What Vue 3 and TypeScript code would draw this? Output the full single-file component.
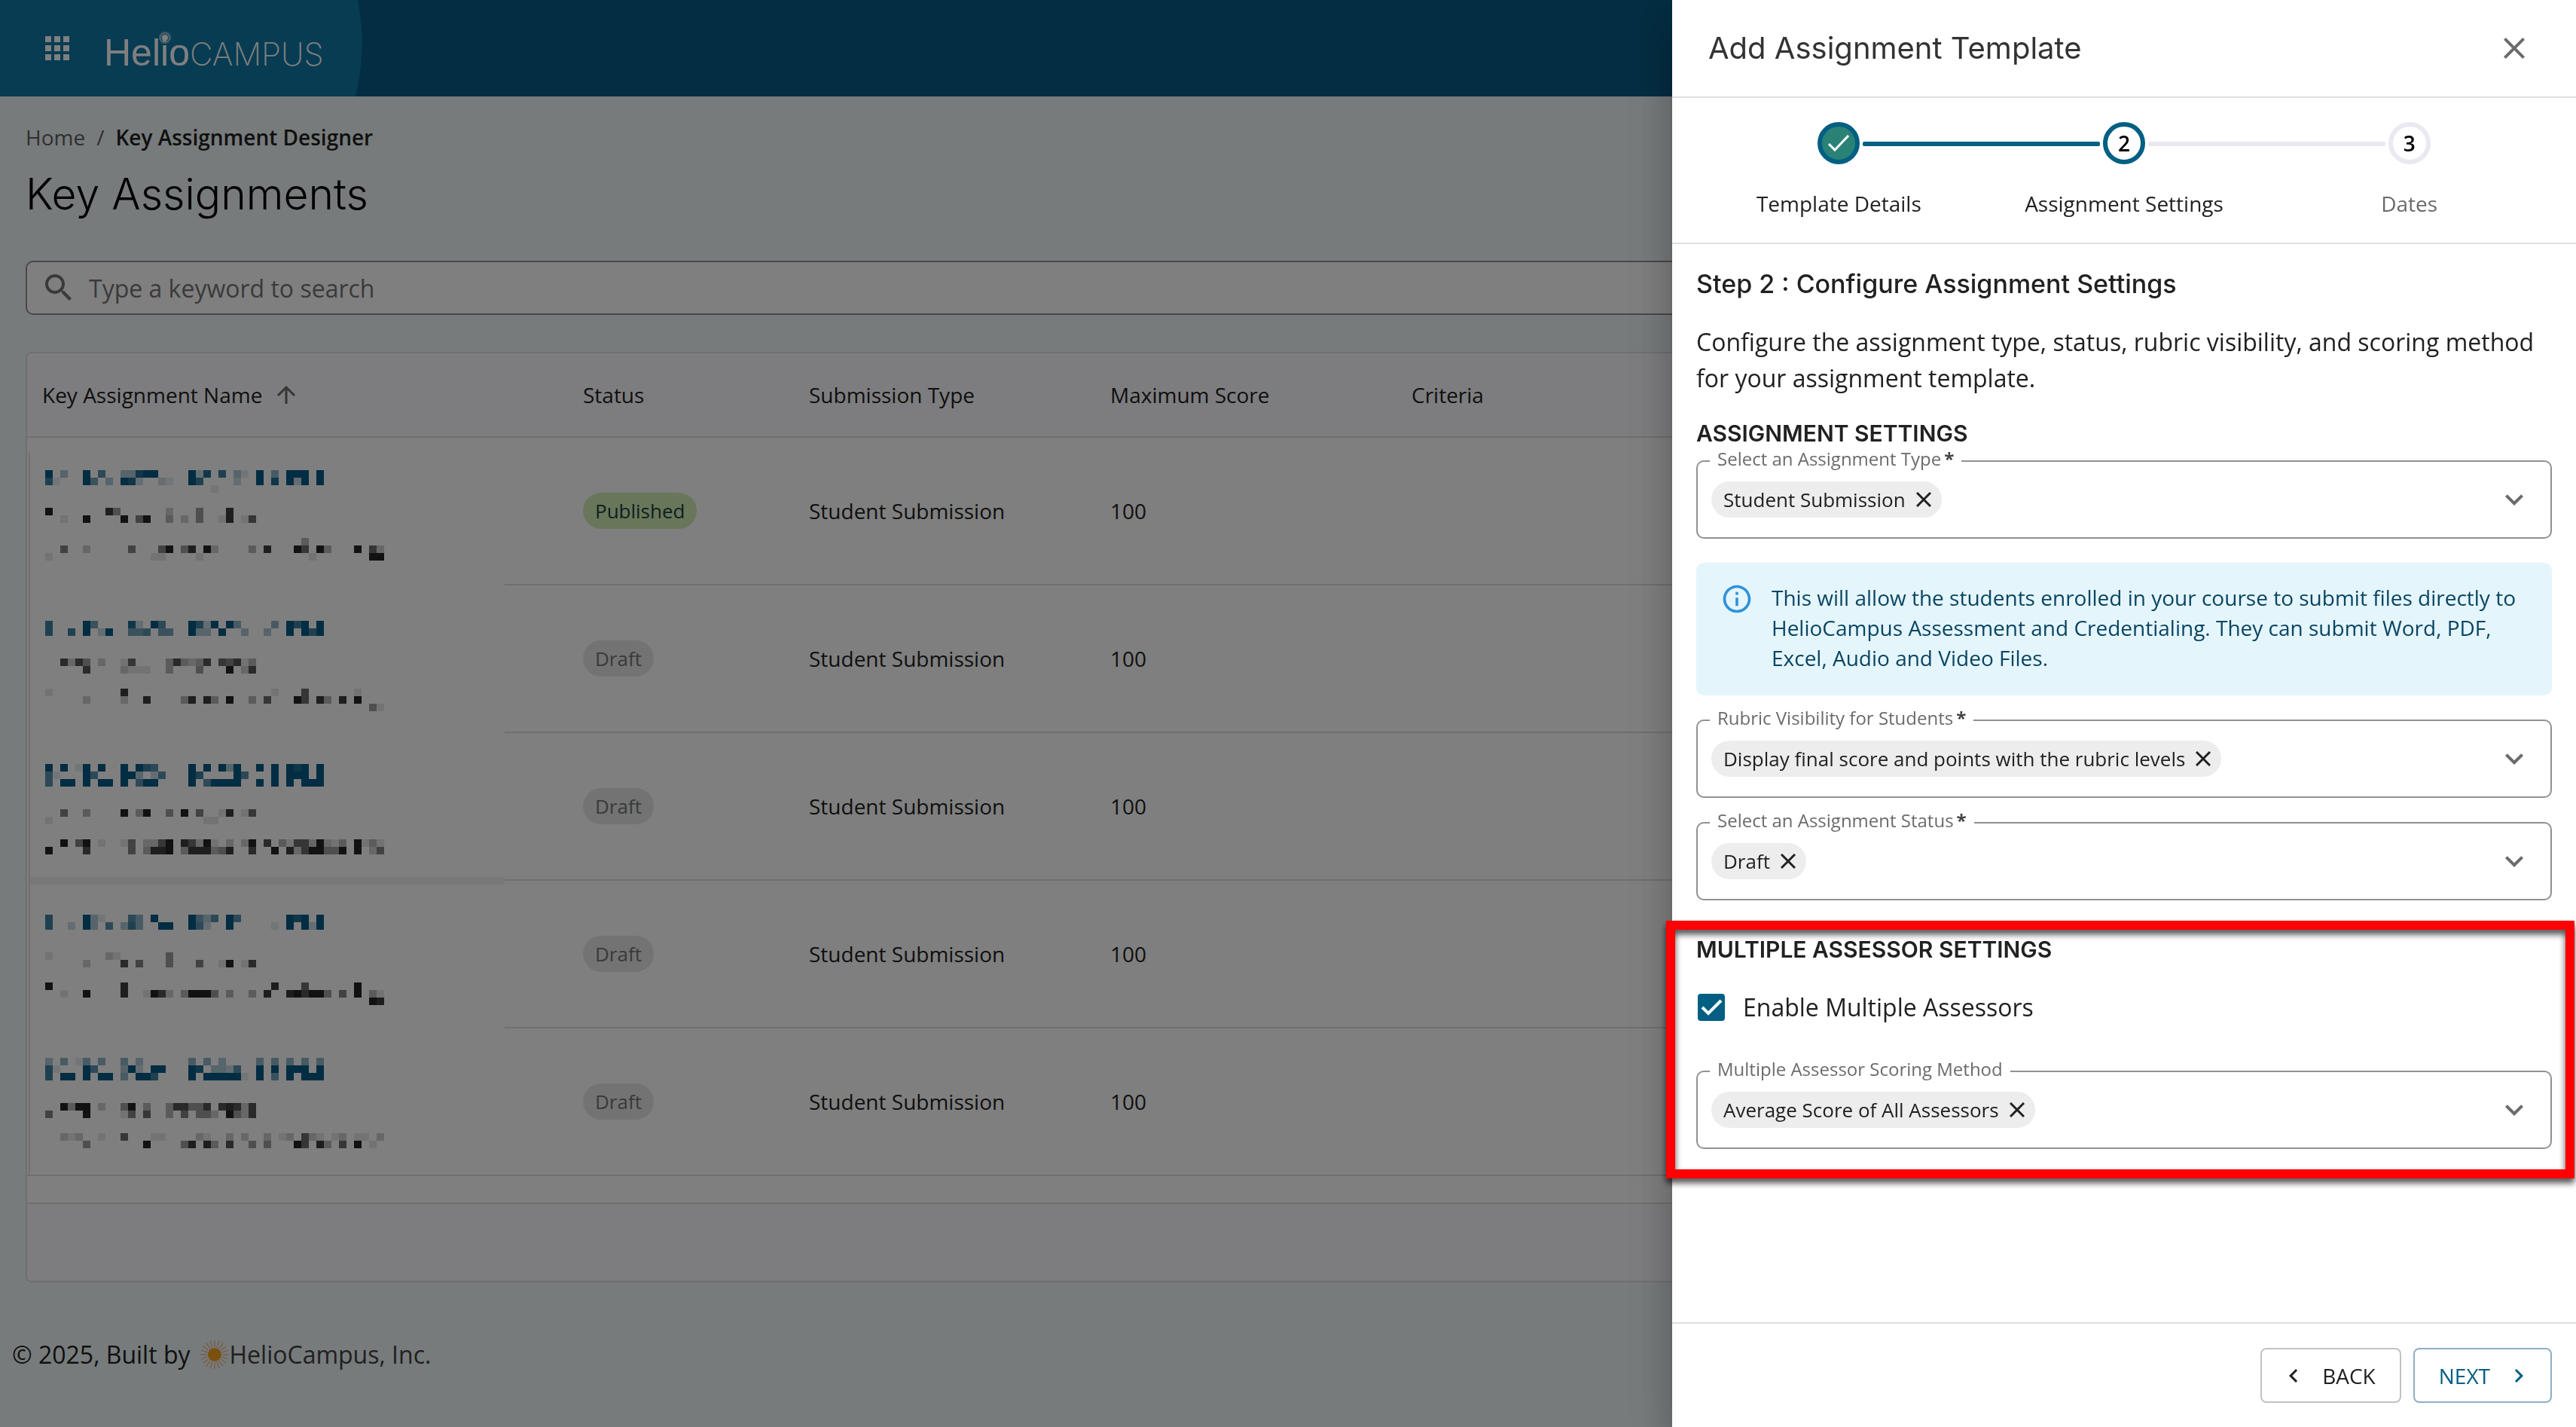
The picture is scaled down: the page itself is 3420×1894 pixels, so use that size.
<script setup lang="ts">
import { ref } from 'vue'

interface Band {
  y: number
  tone: 'link' | 'ink'
  cells: string
}

interface Row {
  status: 'Published' | 'Draft'
  type: string
  score: number
  bands: Band[]
}

interface Rect {
  x: number
  y: number
  opacity: number
  tone: string
}

const link = (y: number, cells: string): Band => ({ y, tone: 'link', cells })
const ink = (y: number, cells: string): Band => ({ y, tone: 'ink', cells })

// Each digit is one redaction block; its value is the block's strength.
const rows: Row[] = [
  {
    status: 'Published',
    type: 'Student Submission',
    score: 100,
    bands: [
      link(43, '9.3..9.6..33899....928.7.31.9.4.999.9'),
      link(53, '71...95.3.982..21..97....2..9.8.929.9'),
      link(63, '......................1'),
      ink(93, '9.......84......2...4...8'),
      ink(103, '..1..9....9.59..3.2.4..18.16'),
      ink(133, '..................................3'),
      ink(143, '..5..2.....5...59.48.92....3.8...96.93...9.62'),
      ink(153, '1.............11....1..............1.......99'),
    ],
  },
  {
    status: 'Draft',
    type: 'Student Submission',
    score: 100,
    bands: [
      link(47, '7....95....82.96...9729.94....4.979.9'),
      link(57, '7..7.9.29..556.55..933.9..3..3..9.979'),
      ink(97, '..7274.2..16....373237.65713'),
      ink(107, '.....7....2111..3...4...9.27'),
      ink(137, '1.........8...................1...6......1'),
      ink(147, '.....2....2..8....38.83.9..3.6...96.83.8.9'),
      ink(157, '...........................................41'),
    ],
  },
  {
    status: 'Draft',
    type: 'Student Submission',
    score: 100,
    bands: [
      link(41, '9.9.19.9..9.976....9.9.939..9.9.989.9'),
      link(51, '61...96...993.26...97....96...9.999.9'),
      link(61, '6.99.9.99.9.699....9.69999..9.9.9.999'),
      ink(101, '..5..3....9.39..4.9.5..18.16'),
      ink(111, '1....................11'),
      ink(141, '..9.59.1..15.2269.86291.2.29.7.316629213.9131'),
      ink(151, '9....7.....5.3889.3888348..7..9.82699449.9.25'),
    ],
  },
  {
    status: 'Draft',
    type: 'Student Submission',
    score: 100,
    bands: [
      link(45, '7....931...64.9....9536.96......989.9'),
      link(55, '7..2.93.6.374..99..962..9.....1.9.929'),
      ink(95, '1.......21......4'),
      ink(105, '.....2....7.5...4...5..19.17'),
      ink(135, '9.........8...................8...6......9'),
      ink(145, '..1..9....8..1972.39994.3..3.8..897994.5.9.31'),
      ink(155, '...........................................98'),
    ],
  },
  {
    status: 'Draft',
    type: 'Student Submission',
    score: 100,
    bands: [
      link(39, '3.4.14.4..4.3......4.4.3....4.4.4.4.4'),
      link(49, '71...96...392.99...98.3326..9.9.999.9'),
      link(59, '7.99.9.99.4.997....9.999991.9.5.9.999'),
      ink(99, '..9399.2..49.3..377447.78727'),
      ink(109, '5....9....15.6..3.5.442.9427'),
      ink(139, '..212..1..6...11....21..2.2..2.12.621.12.11.2'),
      ink(149, '.....4.......9....48.83.7..4.4...96.83.6.9.1'),
    ],
  },
]

const fills: Record<Band['tone'], string> = { link: '#075b86', ink: '#242424' }

function blocks(bands: Band[]): Rect[] {
  const out: Rect[] = []
  for (const band of bands) {
    band.cells.split('').forEach((cell, i) => {
      if (cell !== '.') {
        out.push({ x: 24 + i * 10, y: band.y, opacity: Number(cell) / 9, tone: fills[band.tone] })
      }
    })
  }
  return out
}

const rays = Array.from({ length: 20 }, (_, i) => i * 18)

interface Field {
  id: string
  label: string
  required: boolean
  value: string
}

const typeField: Field = { id: 'assignment-type', label: 'Select an Assignment Type', required: true, value: 'Student Submission' }
const laterFields: Field[] = [
  { id: 'rubric-visibility', label: 'Rubric Visibility for Students', required: true, value: 'Display final score and points with the rubric levels' },
  { id: 'assignment-status', label: 'Select an Assignment Status', required: true, value: 'Draft' },
]
const scoringField: Field = { id: 'scoring-method', label: 'Multiple Assessor Scoring Method', required: false, value: 'Average Score of All Assessors' }

const groups = [
  { fields: [typeField], info: true },
  { fields: laterFields, info: false },
]

const search = ref('')
const multiple = ref(true)
</script>

<template>
  <div class="page">
    <header class="topbar">
      <button class="icon-btn" type="button">
        <svg width="48" height="48" viewBox="0 0 24 24" fill="#fff" aria-hidden="true">
          <path d="M4 8h4V4H4zm6 12h4v-4h-4zm-6 0h4v-4H4zm0-6h4v-4H4zm6 0h4v-4h-4zm6-10v4h4V4zm-6 4h4V4h-4zm6 6h4v-4h-4zm0 6h4v-4h-4z" />
        </svg>
      </button>
      <a class="logo" href="#">
        <span class="logo-helio">Helio</span><span class="logo-campus">CAMPUS</span>
        <svg class="logo-sun" width="28" height="28" viewBox="-14 -14 28 28" aria-hidden="true">
          <circle r="4" fill="#fff" />
          <line v-for="a in rays" :key="a" y1="-5" y2="-8" stroke="#fff" stroke-width="1" :transform="`rotate(${a})`" />
        </svg>
      </a>
    </header>

    <main class="content">
      <nav class="crumbs">
        <a href="#">Home</a><span class="slash">/</span><strong>Key Assignment Designer</strong>
      </nav>
      <h1>Key Assignments</h1>
      <label class="search">
        <svg width="48" height="48" viewBox="0 0 24 24" fill="#757575" aria-hidden="true">
          <path d="M15.5 14h-.79l-.28-.27C15.41 12.59 16 11.11 16 9.5 16 5.91 13.09 3 9.5 3S3 5.91 3 9.5 5.91 16 9.5 16c1.61 0 3.09-.59 4.23-1.57l.27.28v.79l5 4.99L20.49 19zm-6 0C7.01 14 5 11.99 5 9.5S7.01 5 9.5 5 14 7.01 14 9.5 11.99 14 9.5 14" />
        </svg>
        <input v-model="search" type="text" placeholder="Type a keyword to search" />
      </label>

      <section class="card">
        <table>
          <thead>
            <tr>
              <th class="c-name">
                <span class="sort">Key Assignment Name
                  <svg width="28" height="28" viewBox="0 0 28 28" fill="none" stroke="#6b6b6b" stroke-width="3" aria-hidden="true">
                    <path d="M14 26V4M3 15 14 4l11 11" />
                  </svg>
                </span>
              </th>
              <th class="c-status">Status</th>
              <th class="c-type">Submission Type</th>
              <th class="c-score">Maximum Score</th>
              <th>Criteria</th>
            </tr>
          </thead>
          <tbody>
            <tr v-for="(row, i) in rows" :key="i">
              <td class="masked">
                <svg width="718" height="196" viewBox="0 0 718 196" aria-hidden="true">
                  <rect x="2" :y="i === 0 ? 20 : 0" width="2" :height="i === 0 ? 176 : 196" fill="#dedede" />
                  <rect v-if="i < 4" x="634" y="194" width="84" height="2" fill="#dedede" />
                  <rect v-else x="0" y="194" width="718" height="2" fill="#dedede" />
                  <rect v-if="i === 2" x="4" y="191" width="630" height="10" fill="#f0f0f0" />
                  <rect v-for="(b, n) in blocks(row.bands)" :key="n" :x="b.x" :y="b.y" width="10" height="10" :fill="b.tone" :fill-opacity="b.opacity" />
                </svg>
              </td>
              <td><span class="status" :class="{ live: row.status === 'Published' }">{{ row.status }}</span></td>
              <td>{{ row.type }}</td>
              <td>{{ row.score }}</td>
              <td></td>
            </tr>
          </tbody>
        </table>
        <div class="card-foot"></div>
      </section>
    </main>

    <footer class="legal">
      <span>© 2025, Built by</span>
      <svg width="40" height="44" viewBox="-20 -22 40 44" aria-hidden="true">
        <circle r="9" fill="#f9a11f" />
        <line v-for="a in rays" :key="a" y1="-10" y2="-19" stroke="#f0a860" stroke-width="1" :transform="`rotate(${a})`" />
      </svg>
      <a href="#">HelioCampus, Inc.</a>
    </footer>
  </div>

  <div class="scrim"></div>

  <aside class="drawer">
    <header class="drawer-head">
      <h2>Add Assignment Template</h2>
      <button class="icon-btn" type="button">
        <svg width="48" height="48" viewBox="0 0 24 24" fill="#6b6b6b" aria-hidden="true">
          <path d="M19 6.41 17.59 5 12 10.59 6.41 5 5 6.41 10.59 12 5 17.59 6.41 19 12 13.41 17.59 19 19 17.59 13.41 12z" />
        </svg>
      </button>
    </header>

    <ol class="stepper">
      <li class="done">
        <span class="dot">
          <svg width="32" height="32" viewBox="0 0 32 32" fill="none" stroke="#fff" stroke-width="3" aria-hidden="true">
            <path d="M3 17l8 8L29 6" />
          </svg>
        </span>
        <span class="step-label">Template Details</span>
      </li>
      <li class="current">
        <span class="dot">2</span>
        <span class="step-label">Assignment Settings</span>
      </li>
      <li>
        <span class="dot">3</span>
        <span class="step-label">Dates</span>
      </li>
    </ol>

    <div class="drawer-body">
      <h3>Step 2 : Configure Assignment Settings</h3>
      <p>Configure the assignment type, status, rubric visibility, and scoring method for your assignment template.</p>

      <h4>ASSIGNMENT SETTINGS</h4>
      <div class="stack">
        <template v-for="(group, g) in groups" :key="g">
          <div v-for="f in group.fields" :key="f.id" class="field">
            <label :for="f.id">{{ f.label }}<b v-if="f.required">*</b></label>
            <span class="chip">{{ f.value }}
              <button type="button">
                <svg width="20" height="20" viewBox="0 0 20 20" stroke="#212121" stroke-width="3" aria-hidden="true"><path d="M1 1l18 18M19 1 1 19" /></svg>
              </button>
            </span>
            <select :id="f.id"><option value=""></option></select>
            <svg class="caret" width="48" height="48" viewBox="0 0 24 24" fill="#6b6b6b" aria-hidden="true"><path d="M7.41 8.59 12 13.17l4.59-4.58L18 10l-6 6-6-6z" /></svg>
          </div>
          <div v-if="group.info" class="info">
            <svg width="44" height="44" viewBox="0 0 24 24" fill="#2f93d8" aria-hidden="true">
              <path d="M11 7h2v2h-2zm0 4h2v6h-2zm1-9C6.48 2 2 6.48 2 12s4.480 10 10 10 10-4.480 10-10S17.520 2 12 2m0 18c-4.410 0-8-3.590-8-8s3.590-8 8-8 8 3.590 8 8-3.590 8-8 8" />
            </svg>
            <span>This will allow the students enrolled in your course to submit files directly to HelioCampus Assessment and Credentialing. They can submit Word, PDF, Excel, Audio and Video Files.</span>
          </div>
        </template>
      </div>

      <section class="assessors">
        <h4>MULTIPLE ASSESSOR SETTINGS</h4>
        <label class="check">
          <input v-model="multiple" type="checkbox" />
          <svg width="36" height="36" viewBox="0 0 36 36" fill="none" stroke="#fff" stroke-width="4" aria-hidden="true"><path d="M6 18l8 8L31 9" /></svg>
          <span>Enable Multiple Assessors</span>
        </label>
        <div class="field">
          <label :for="scoringField.id">{{ scoringField.label }}</label>
          <span class="chip">{{ scoringField.value }}
            <button type="button">
              <svg width="20" height="20" viewBox="0 0 20 20" stroke="#212121" stroke-width="3" aria-hidden="true"><path d="M1 1l18 18M19 1 1 19" /></svg>
            </button>
          </span>
          <select :id="scoringField.id"><option value=""></option></select>
          <svg class="caret" width="48" height="48" viewBox="0 0 24 24" fill="#6b6b6b" aria-hidden="true"><path d="M7.41 8.59 12 13.17l4.59-4.58L18 10l-6 6-6-6z" /></svg>
        </div>
        <div class="highlight"></div>
      </section>
    </div>

    <footer class="drawer-foot">
      <button class="btn back" type="button">
        <svg width="36" height="36" viewBox="0 0 24 24" fill="currentColor" aria-hidden="true"><path d="M15.410 7.410 14 6l-6 6 6 6 1.410-1.410L10.830 12z" /></svg>
        BACK
      </button>
      <button class="btn next" type="button">
        NEXT
        <svg width="36" height="36" viewBox="0 0 24 24" fill="currentColor" aria-hidden="true"><path d="M10 6 8.590 7.410 13.170 12l-4.580 4.590L10 18l6-6z" /></svg>
      </button>
    </footer>
  </aside>
</template>

<style>
body {
  background: #eff6f8;
}
</style>

<style scoped>
.page,
.drawer,
.page input,
.drawer button {
  font-family: 'Open Sans', 'Noto Sans', sans-serif;
}

.page,
.drawer {
  font-size: 28px;
  color: #212121;
}

h1,
h2,
h3,
h4 {
  margin: 0;
  font-family: Inter, 'Open Sans', sans-serif;
}

a {
  color: inherit;
  text-decoration: none;
}

svg {
  display: block;
  flex: none;
}

.icon-btn {
  padding: 0;
  border: 0;
  background: none;
}

.topbar {
  display: flex;
  align-items: center;
  height: 128px;
  padding-left: 52px;
  gap: 38px;
  background: radial-gradient(circle at 190px 57px, #0f78a6 290px, #075b86 291px);
}

.logo {
  position: relative;
  display: flex;
  align-items: baseline;
  padding-top: 14px;
  color: #fff;
  line-height: 64px;
}

.logo-helio {
  font-family: 'Liberation Sans', sans-serif;
  font-size: 50px;
}

.logo-campus {
  font-family: Inter, sans-serif;
  font-size: 42px;
  font-weight: 200;
}

.logo-sun {
  position: absolute;
  left: 67px;
  top: 12px;
}

.content {
  padding: 34px 34px 0;
}

.crumbs {
  display: flex;
  line-height: 40px;
  color: #616161;
}

.crumbs .slash {
  padding: 0 15px;
}

.crumbs strong {
  font-weight: 600;
  color: #212121;
}

h1 {
  margin: 20px 0 52px;
  font-size: 57px;
  line-height: 72px;
  font-weight: 300;
  color: #000;
}

.search {
  display: flex;
  align-items: center;
  gap: 16px;
  height: 68px;
  padding: 0 18px;
  border: 2px solid #919191;
  border-radius: 10px;
  background: #fff;
}

.search input {
  flex: 1;
  padding: 0;
  border: 0;
  outline: 0;
  background: none;
  font-size: 32px;
}

.search input::placeholder {
  color: #757575;
  opacity: 1;
}

.card {
  margin-top: 49px;
  border: 2px solid #dedee0;
  border-radius: 8px;
  background: #fff;
  overflow: hidden;
}

table {
  width: 100%;
  table-layout: fixed;
  border-spacing: 0;
}

th,
td {
  padding: 0 20px;
  border-bottom: 2px solid #dedede;
  text-align: left;
}

th {
  height: 110px;
  background: #fbfbfe;
  font-weight: 500;
}

td {
  height: 194px;
}

td.masked {
  height: 196px;
  padding: 0;
  border-bottom: 0;
}

td.masked svg {
  overflow: visible;
}

.c-name {
  width: 678px;
}

.c-status {
  width: 260px;
}

.c-type,
.c-score {
  width: 360px;
}

.sort {
  display: flex;
  align-items: center;
  gap: 18px;
}

.status {
  display: inline-block;
  padding: 0 16px;
  border-radius: 24px;
  background: #e6e6e6;
  color: #757575;
  font-size: 26px;
  line-height: 48px;
}

.status.live {
  background: #d0eeb4;
  color: #1d3f42;
}

.card-foot {
  height: 102px;
  margin-top: 35px;
  border-top: 2px solid #dedede;
  background: #fbfbfe;
}

.legal {
  display: flex;
  align-items: center;
  padding: 72px 16px 48px;
  font-size: 32px;
  line-height: 48px;
}

.legal svg {
  margin-left: 12px;
}

.legal a {
  color: #424242;
}

.scrim {
  position: fixed;
  inset: 0;
  background: rgba(0, 0, 0, 0.5);
}

.drawer {
  position: fixed;
  top: 0;
  right: 0;
  bottom: 0;
  display: flex;
  flex-direction: column;
  width: 1200px;
  max-width: 100%;
  background: #fff;
  box-shadow: 0 16px 20px -10px rgba(0, 0, 0, 0.2), 0 32px 48px 4px rgba(0, 0, 0, 0.14), 0 12px 60px 10px rgba(0, 0, 0, 0.12);
}

.drawer-head {
  display: flex;
  align-items: center;
  justify-content: space-between;
  height: 128px;
  padding: 0 58px 0 48px;
  border-bottom: 2px solid #dedede;
}

h2 {
  font-size: 40px;
  line-height: 48px;
  font-weight: 400;
  color: #333;
}

.stepper {
  display: flex;
  margin: 0;
  padding: 32px;
  border-bottom: 2px solid #dedede;
  list-style: none;
}

.stepper li {
  position: relative;
  flex: 1;
  display: flex;
  flex-direction: column;
  align-items: center;
  gap: 32px;
  color: #6b6b6b;
}

.stepper li + li::before {
  content: '';
  position: absolute;
  top: 26px;
  left: calc(-50% + 32px);
  right: calc(50% + 32px);
  height: 6px;
  border-radius: 2px;
  background: #e9e9f1;
}

.stepper li.current::before {
  background: #005f83;
}

.dot {
  display: flex;
  align-items: center;
  justify-content: center;
  box-sizing: border-box;
  width: 56px;
  height: 56px;
  border: 6px solid #e9e9f1;
  border-radius: 50%;
  color: #000;
  font-weight: 600;
}

.current .dot,
.done .dot {
  border-color: #005f83;
}

.done .dot {
  background: #2a8276;
}

.step-label {
  line-height: 40px;
}

.done .step-label,
.current .step-label {
  color: #212121;
  font-weight: 500;
}

.drawer-body {
  flex: 1;
  padding: 29px 32px 0;
}

h3 {
  font-size: 34px;
  line-height: 48px;
  font-weight: 500;
}

p {
  margin: 29px 0;
  font-size: 32px;
  line-height: 48px;
}

h4 {
  font-size: 30px;
  line-height: 40px;
  font-weight: 600;
}

.stack {
  display: flex;
  flex-direction: column;
  gap: 32px;
  margin-top: 16px;
}

.field {
  position: relative;
  display: flex;
  align-items: center;
  height: 100px;
  padding: 0 24px 0 18px;
  border: 2px solid #919191;
  border-radius: 10px;
}

.field label {
  position: absolute;
  top: -20px;
  left: 16px;
  padding: 0 10px;
  background: #fff;
  color: #6b6b6b;
  font-size: 24px;
  line-height: 32px;
}

.field label b {
  padding-left: 4px;
  color: #424242;
}

.chip {
  display: flex;
  align-items: center;
  gap: 14px;
  padding: 0 14px 0 16px;
  border-radius: 24px;
  background: #ededed;
  font-size: 26px;
  line-height: 48px;
}

.chip button {
  padding: 0;
  border: 0;
  background: none;
}

.field select {
  flex: 1;
  align-self: stretch;
  min-width: 0;
  border: 0;
  outline: 0;
  background: none;
  appearance: none;
}

.info {
  display: flex;
  gap: 24px;
  padding: 26px 32px 30px;
  border-radius: 10px;
  background: #e4f5fc;
  color: #0a4562;
  line-height: 40px;
}

.assessors {
  position: relative;
  margin-top: 45px;
}

.check {
  display: flex;
  align-items: center;
  margin: 33px 0 60px 2px;
  font-size: 32px;
  line-height: 48px;
}

.check input {
  width: 36px;
  height: 36px;
  margin: 0;
  border-radius: 4px;
  background: #005f83;
  appearance: none;
}

.check svg {
  margin-left: -36px;
}

.check span {
  padding-left: 24px;
}

.highlight {
  position: absolute;
  inset: -18px -30px -39px -40px;
  border: 12px solid #f00;
  filter: drop-shadow(0 6px 4px rgba(0, 0, 0, 0.7));
  pointer-events: none;
}

.drawer-foot {
  display: flex;
  justify-content: flex-end;
  gap: 16px;
  padding: 32px;
  border-top: 2px solid #dedede;
}

.btn {
  display: flex;
  align-items: center;
  gap: 20px;
  height: 73px;
  border: 2px solid #c2c2c2;
  border-radius: 8px;
  background: #fff;
  color: #212121;
  font-size: 28px;
  font-weight: 500;
}

.btn.back {
  padding: 0 32px 0 24px;
}

.btn.next {
  padding: 0 24px 0 32px;
  border-color: #8fafc3;
  color: #005f83;
}
</style>
